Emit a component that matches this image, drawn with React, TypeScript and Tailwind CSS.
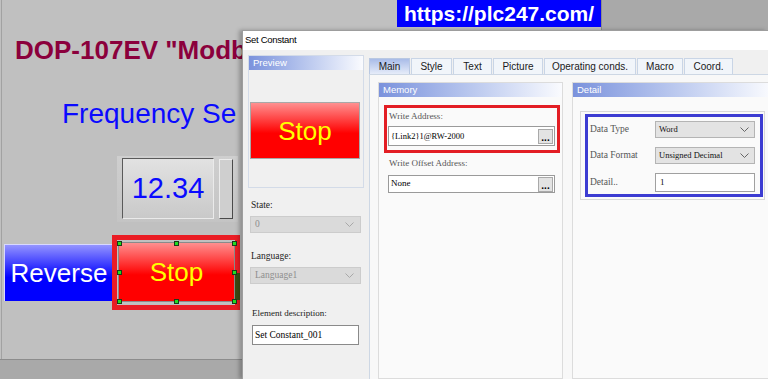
import React from "react";

const Chevron = ({ color = "#666" }: { color?: string }) => (
  <svg width="9" height="5" viewBox="0 0 9 5" className="shrink-0">
    <polyline points="0.5,0.5 4.5,4.5 8.5,0.5" fill="none" stroke={color} strokeWidth="1" />
  </svg>
);

const Dots = () => (
  <div className="w-[15px] h-[15px] border border-[#a9a9a9] bg-[#e3e3e3] flex items-end justify-center pb-[1px] text-[10px] leading-[8px] font-bold text-black font-['Liberation_Sans',sans-serif]">
    ...
  </div>
);

const GroupHeader = ({ title }: { title: string }) => (
  <div className="h-[14px] bg-gradient-to-r from-[#7b92dc] via-[#b9c7ee] to-[#fafbfe] text-white text-[9.5px] leading-[14px] pl-[4px] font-['Liberation_Sans',sans-serif]">
    {title}
  </div>
);

const handles: [number, number][] = [
  [119, 243], [176, 243], [234, 243],
  [119, 272], [234, 272],
  [119, 301], [176, 301], [234, 301],
];

const tabs: { label: string; w: string; active?: boolean }[] = [
  { label: "Main", w: "w-[41px]", active: true },
  { label: "Style", w: "w-[41px]" },
  { label: "Text", w: "w-[39px]" },
  { label: "Picture", w: "w-[50px]" },
  { label: "Operating conds.", w: "w-[92px]" },
  { label: "Macro", w: "w-[46px]" },
  { label: "Coord.", w: "w-[49px]" },
];

export default function App() {
  return (
    <div className="relative w-[768px] h-[379px] overflow-hidden bg-[#a9a9a9] font-['Liberation_Sans',sans-serif]">
      {/* HMI screen canvas */}
      <div className="absolute left-0 top-0 w-[602px] h-[360px] bg-[#c0c0c0] border-r border-b border-[#8c8c8c]" />
      <div className="absolute left-[1px] top-0 w-[1px] h-[359px] bg-[#a2a2a2]" />

      <div className="absolute left-[397px] top-0 w-[204px] h-[27px] bg-[#0000ff] flex items-center justify-center text-white font-bold text-[21px] leading-[27px]">
        https://plc247.com/
      </div>

      <div className="absolute left-[15px] top-[35px] w-[227px] overflow-hidden whitespace-nowrap text-[26px] leading-[30px] font-bold text-[#8b003c]">
        DOP-107EV "Modb
      </div>

      <div className="absolute left-[62px] top-[98px] w-[180px] overflow-hidden whitespace-nowrap text-[28px] leading-[32px] text-[#0a0aff]">
        Frequency Se
      </div>

      {/* numeric display */}
      <div className="absolute left-[117px] top-[156px] w-[121px] h-[66px] bg-gradient-to-b from-[#cfcfcf] to-[#c4c4c4]" />
      <div className="absolute left-[122px] top-[158px] w-[92px] h-[61px] border border-t-[#5a5a5a] border-l-[#5a5a5a] border-r-[#eaeaea] border-b-[#eaeaea] bg-gradient-to-b from-[#e2e2e2] to-[#c9c9c9] flex items-center justify-center text-[29px] leading-none text-[#0a0aff]">
        12.34
      </div>
      <div className="absolute left-[219px] top-[159px] w-[14px] h-[60px] border border-t-[#ececec] border-l-[#ececec] border-r-[#4a4a4a] border-b-[#4a4a4a] bg-[#cfcfcf]" />

      {/* Reverse button */}
      <div className="absolute left-[4px] top-[244px] w-[109px] h-[57px] border-t border-l border-[#d8d8ff] bg-[linear-gradient(to_bottom,#9494ff,#0000ff_58%)] flex items-center justify-center text-white text-[26px] leading-none">
        Reverse
      </div>

      {/* Selected Stop button */}
      <div className="absolute left-[112px] top-[235px] w-[128px] h-[75px] border-[5px] border-[#ea1c24]" />
      <div className="absolute left-[235px] top-[273px] w-[5px] h-[27px] bg-[#3b4a12]" />
      <div className="absolute left-[118px] top-[242px] w-[117px] h-[60px] border border-[#8a8a8a]" />
      <div className="absolute left-[119px] top-[243px] w-[115px] h-[58px] bg-[linear-gradient(to_bottom,#ff8f8f,#ff0000_55%)] flex items-center justify-center text-[#ffff00] text-[26px] leading-none">
        Stop
      </div>
      {handles.map(([x, y], i) => (
        <div
          key={i}
          className="absolute w-[5px] h-[5px] bg-[#22dd22] border border-[#1a3a1a]"
          style={{ left: x - 2, top: y - 2 }}
        />
      ))}

      {/* Dialog window */}
      <div className="absolute left-[242px] top-[30px] right-0 bottom-0 border-l border-t border-[#9d9d9d] bg-[#f0f0f0] flex flex-col shadow-[-3px_0_4px_rgba(0,0,0,0.25)]">
        <div className="h-[19px] bg-white pl-[2px] flex items-center text-[9.5px] tracking-[-0.3px] text-black shrink-0">
          Set Constant
        </div>
        <div className="flex-1 flex pl-[5px] min-h-0">
          {/* left column */}
          <div className="w-[116px] pt-[5px] flex flex-col shrink-0 font-['Liberation_Serif',serif]">
            <div className="h-[133px] border border-[#d3dbe8] bg-[#f0f0f0] flex flex-col">
              <GroupHeader title="Preview" />
              <div className="mt-[32px] ml-[1px] w-[110px] h-[57px] border border-[#a8a8a8] bg-[linear-gradient(to_bottom,#ff9090,#ff0000_55%)] flex items-center justify-center text-[#ffff00] text-[26px] leading-none font-['Liberation_Sans',sans-serif]">
                Stop
              </div>
            </div>
            <div className="mt-[11px] ml-[3px] h-[12px] leading-[12px] text-[9.5px] text-[#222]">State:</div>
            <div className="mt-[5px] ml-[2px] w-[111px] h-[17px] border border-[#cccccc] bg-[#dadada] flex items-center justify-between pl-[4px] pr-[6px] text-[9.5px] text-[#8e8e8e]">
              <span>0</span>
              <Chevron color="#a8a8a8" />
            </div>
            <div className="mt-[17px] ml-[3px] h-[12px] leading-[12px] text-[9.5px] text-[#222]">Language:</div>
            <div className="mt-[5px] ml-[2px] w-[111px] h-[17px] border border-[#cccccc] bg-[#dadada] flex items-center justify-between pl-[4px] pr-[6px] text-[9.5px] text-[#8e8e8e]">
              <span>Language1</span>
              <Chevron color="#a8a8a8" />
            </div>
            <div className="mt-[23px] ml-[4px] h-[12px] leading-[12px] text-[9px] text-[#222]">Element description:</div>
            <div className="mt-[6px] ml-[4px] w-[107px] h-[20px] border border-[#8a8a8a] bg-white flex items-center pl-[2px] text-[9.5px] text-black">
              Set Constant_001
            </div>
          </div>

          {/* right area */}
          <div className="flex-1 ml-[5px] pt-[8px] flex flex-col min-w-0">
            <div className="h-[16px] flex gap-[1px] shrink-0">
              {tabs.map((t) => (
                <div
                  key={t.label}
                  className={
                    t.active
                      ? `${t.w} h-[16px] border border-b-0 border-[#b9c8e2] bg-gradient-to-b from-[#a9bce8] to-[#e6ecf9] flex items-center justify-center text-[10px] text-[#1a1a1a]`
                      : `${t.w} h-[16px] border border-b-0 border-[#c9d5e6] bg-[#f1f5fa] flex items-center justify-center text-[10px] text-[#1a1a1a]`
                  }
                >
                  {t.label}
                </div>
              ))}
            </div>
            <div className="flex-1 border-l border-t border-[#cdd7e4] bg-[#f8f8f8] pt-[7px] pl-[8px] flex gap-[9px] overflow-hidden">
              {/* Memory group */}
              <div className="w-[185px] shrink-0 border border-[#dcdcdc] bg-[#fafafa] flex flex-col font-['Liberation_Serif',serif]">
                <GroupHeader title="Memory" />
                <div className="mt-[8px] ml-[5px] w-[176px] h-[48px] border-[3px] border-[#e31e24] flex flex-col">
                  <div className="mt-[2px] ml-[2px] h-[12px] leading-[12px] text-[9px] text-[#555]">Write Address:</div>
                  <div className="mt-[4px] ml-[1px] w-[167px] h-[20px] border border-[#9a9a9a] bg-white flex items-center justify-between pl-[2px] pr-[1px] text-[8.5px] text-black">
                    <span>{"{Link2}1@RW-2000"}</span>
                    <Dots />
                  </div>
                </div>
                <div className="mt-[4px] ml-[10px] h-[12px] leading-[12px] text-[9px] text-[#555]">Write Offset Address:</div>
                <div className="mt-[6px] ml-[9px] w-[167px] h-[18px] border border-[#9a9a9a] bg-white flex items-center justify-between pl-[2px] pr-[1px] text-[9px] text-black">
                  <span>None</span>
                  <Dots />
                </div>
              </div>

              {/* Detail group */}
              <div className="w-[200px] shrink-0 border border-[#dcdcdc] bg-[#fafafa] flex flex-col font-['Liberation_Serif',serif]">
                <GroupHeader title="Detail" />
                <div className="mt-[14px] ml-[7px] w-[185px] h-[89px] border border-[#d8d8d8]">
                  <div className="mt-[2px] ml-[4px] w-[178px] h-[83px] border-[3px] border-[#3c3cd2] pt-[4px] pl-[2px] flex flex-col gap-[9px]">
                    <div className="flex items-center h-[17px]">
                      <div className="w-[65px] text-[9.5px] text-[#555]">Data Type</div>
                      <div className="w-[100px] h-[17px] border border-[#b4b4b4] bg-[#e3e3e3] flex items-center justify-between pl-[3px] pr-[5px] text-[8.5px] text-[#111]">
                        <span>Word</span>
                        <Chevron color="#666" />
                      </div>
                    </div>
                    <div className="flex items-center h-[17px]">
                      <div className="w-[65px] text-[9.5px] text-[#555]">Data Format</div>
                      <div className="w-[100px] h-[17px] border border-[#b4b4b4] bg-[#e3e3e3] flex items-center justify-between pl-[3px] pr-[5px] text-[8.5px] text-[#111]">
                        <span>Unsigned Decimal</span>
                        <Chevron color="#666" />
                      </div>
                    </div>
                    <div className="flex items-center h-[19px]">
                      <div className="w-[65px] text-[9.5px] text-[#555]">Detail..</div>
                      <div className="w-[100px] h-[19px] border border-[#a0a0a0] bg-white flex items-center pl-[4px] text-[9px] text-[#111]">
                        1
                      </div>
                    </div>
                  </div>
                </div>
              </div>
            </div>
          </div>
        </div>
      </div>
    </div>
  );
}
